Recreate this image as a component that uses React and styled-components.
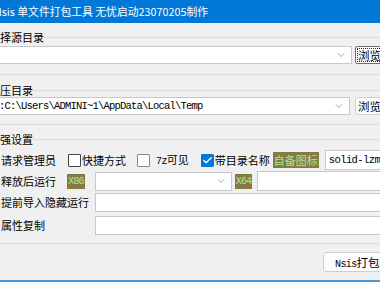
import styled, { createGlobalStyle } from 'styled-components'
import { ChevronDown, Check } from 'lucide-react'

const GlobalStyle = createGlobalStyle`
  html, body {
    margin: 0;
    padding: 0;
  }
  body {
    background: #f0f0f0;
    font-family: "Noto Sans CJK SC", "Noto Sans", sans-serif;
    overflow: hidden;
  }
`

function App() {
    return (
        <Window>
            <GlobalStyle />
            <TitleBar>
                <TitleText>Nsis 单文件打包工具 无忧启动23070205制作</TitleText>
            </TitleBar>

            <Group $top={8} $bottom={10}>
                <Legend>选择源目录</Legend>
                <Row $mt={2}>
                    <Combo $h={18}>
                        <ComboText />
                        <ChevronDown size={12} strokeWidth={1.4} color="#808080" />
                    </Combo>
                    <BrowseButton $focused>浏览</BrowseButton>
                </Row>
            </Group>

            <Group $top={9} $bottom={9}>
                <Legend>解压目录</Legend>
                <Row>
                    <Combo $h={18}>
                        <ComboText $mono>:C:\Users\ADMINI~1\AppData\Local\Temp</ComboText>
                        <ChevronDown size={12} strokeWidth={1.4} color="#808080" />
                    </Combo>
                    <BrowseButton>浏览</BrowseButton>
                </Row>
            </Group>

            <Group $top={8} $bottom={8}>
                <Legend>增强设置</Legend>
                <OptionRow>
                    <Label>请求管理员</Label>
                    <CheckBox $ml={12} />
                    <Label $ml={1}>快捷方式</Label>
                    <CheckBox $ml={11} $light />
                    <Label $ml={6}><Mono>7z</Mono>可见</Label>
                    <CheckBox $ml={12} $checked>
                        <Check size={11} strokeWidth={3} color="#fff" />
                    </CheckBox>
                    <Label $ml={1}>带目录名称</Label>
                    <Tag $ml={3} $h={16}>自备图标</Tag>
                    <TextBox $ml={6} $mono>solid-lzma</TextBox>
                </OptionRow>

                <FieldRow $mt={1} $h={20}>
                    <Label $w={66}>释放后运行</Label>
                    <Tag $h={15} $w={18} $mono>X86</Tag>
                    <Combo $ml={10} $w={137} $h={19}>
                        <ComboText />
                        <ChevronDown size={12} strokeWidth={1.4} color="#808080" />
                    </Combo>
                    <Tag $ml={3} $h={15} $w={17} $mono>X64</Tag>
                    <TextBox $ml={5} />
                </FieldRow>

                <FieldRow $mt={2} $h={19}>
                    <Label $w={94}>提前导入隐藏运行</Label>
                    <TextBox />
                </FieldRow>

                <FieldRow $mt={4} $h={19}>
                    <Label $w={94}>属性复制</Label>
                    <TextBox />
                </FieldRow>
            </Group>

            <Footer>
                <PackButton><Mono>Nsis</Mono>打包</PackButton>
            </Footer>
        </Window>
    )
}

export default App

const Window = styled.div`
    box-sizing: border-box;
    width: 380px;
    height: 282px;
    overflow: hidden;
    background: #f0f0f0;
    border-bottom: 2px solid #4a97d6;
`

const TitleBar = styled.div`
    height: 23px;
    background: #0078d7;
    color: #fff;
    display: flex;
    align-items: center;
    white-space: nowrap;
    overflow: hidden;
`

const TitleText = styled.span`
    font-size: 10.8px;
    margin-left: -6px;
    line-height: 1;
`

const Group = styled.fieldset`
    box-sizing: border-box;
    width: 420px;
    min-width: 0;
    margin: ${p => p.$top}px 0 0 -16px;
    padding: 0 3px ${p => p.$bottom}px 4px;
    border: 1px solid #dcdcdc;
`

const Legend = styled.legend`
    padding: 0;
    font-size: 11px;
    line-height: 13px;
    color: #000;
`

const Row = styled.div`
    display: flex;
    align-items: stretch;
    margin-top: ${p => p.$mt || 0}px;
`

const Combo = styled.div`
    box-sizing: border-box;
    display: flex;
    align-items: center;
    flex: ${p => (p.$w ? 'none' : 1)};
    width: ${p => (p.$w ? `${p.$w}px` : 'auto')};
    height: ${p => p.$h}px;
    margin-left: ${p => p.$ml || 0}px;
    padding-right: 4px;
    background: #fff;
    border: 1px solid #c8c8c8;
`

const ComboText = styled.span`
    flex: 1;
    overflow: hidden;
    white-space: nowrap;
    font-family: ${p => (p.$mono ? '"Liberation Mono", monospace' : 'inherit')};
    font-size: ${p => (p.$mono ? '10.5px' : '11px')};
    letter-spacing: ${p => (p.$mono ? '-0.8px' : '0')};
    padding-left: 9px;
    color: #000;
`

const BrowseButton = styled.button`
    box-sizing: border-box;
    width: 45px;
    margin-left: ${p => (p.$focused ? 3 : 5)}px;
    padding: 0 0 0 2px;
    text-align: left;
    font-family: "Noto Sans CJK SC", sans-serif;
    font-size: 11.5px;
    color: #000;
    background: #fdfdfd;
    border: 1px solid ${p => (p.$focused ? '#6f6f6f' : '#d0d0d0')};
    border-radius: 2px;
    outline: ${p => (p.$focused ? '1px dotted #333' : 'none')};
    outline-offset: -3px;
`

const OptionRow = styled.div`
    display: flex;
    align-items: center;
    height: 20px;
    margin-top: 4px;
    padding-left: 12px;
`

const FieldRow = styled.div`
    display: flex;
    align-items: center;
    height: ${p => p.$h}px;
    margin-top: ${p => p.$mt}px;
    padding-left: 12px;
`

const Label = styled.span`
    flex: none;
    width: ${p => (p.$w ? `${p.$w}px` : 'auto')};
    margin-left: ${p => p.$ml || 0}px;
    font-size: 11px;
    line-height: 13px;
    color: #000;
    white-space: nowrap;
`

const Mono = styled.span`
    font-family: "Liberation Mono", monospace;
    font-size: 10px;
    letter-spacing: -0.6px;
`

const CheckBox = styled.span`
    box-sizing: border-box;
    flex: none;
    display: flex;
    align-items: center;
    justify-content: center;
    width: 13px;
    height: 13px;
    margin-left: ${p => p.$ml || 0}px;
    background: ${p => (p.$checked ? '#0078d7' : '#fff')};
    border: 1px solid ${p => (p.$checked ? '#0078d7' : p.$light ? '#8a8a8a' : '#444')};
    border-radius: 1px;
`

const Tag = styled.span`
    box-sizing: border-box;
    flex: none;
    display: flex;
    align-items: center;
    justify-content: center;
    width: ${p => (p.$w ? `${p.$w}px` : 'auto')};
    height: ${p => p.$h}px;
    margin-left: ${p => p.$ml || 0}px;
    padding: ${p => (p.$w ? '0' : '0 1px')};
    background: #857a42;
    color: #a6e89c;
    font-family: ${p => (p.$mono ? '"Liberation Mono", monospace' : 'inherit')};
    font-size: ${p => (p.$mono ? '10px' : '11px')};
    letter-spacing: ${p => (p.$mono ? '-0.8px' : '0')};
    white-space: nowrap;
`

const TextBox = styled.div`
    box-sizing: border-box;
    flex: 1;
    align-self: stretch;
    display: flex;
    align-items: center;
    margin-left: ${p => p.$ml || 0}px;
    padding-left: 3px;
    background: #fff;
    border: 1px solid #c8c8c8;
    font-family: ${p => (p.$mono ? '"Liberation Mono", monospace' : 'inherit')};
    font-size: 10.5px;
    letter-spacing: ${p => (p.$mono ? '-0.6px' : '0')};
    white-space: nowrap;
    overflow: hidden;
`

const Footer = styled.div`
    display: flex;
    justify-content: flex-end;
    margin: 8px -30px 0 0;
`

const PackButton = styled.button`
    box-sizing: border-box;
    width: 87px;
    height: 20px;
    padding: 0 0 0 11px;
    text-align: left;
    font-family: "Noto Sans CJK SC", sans-serif;
    font-size: 11.5px;
    color: #000;
    background: #fdfdfd;
    border: 1px solid #cfcfcf;
    border-radius: 3px;
`
